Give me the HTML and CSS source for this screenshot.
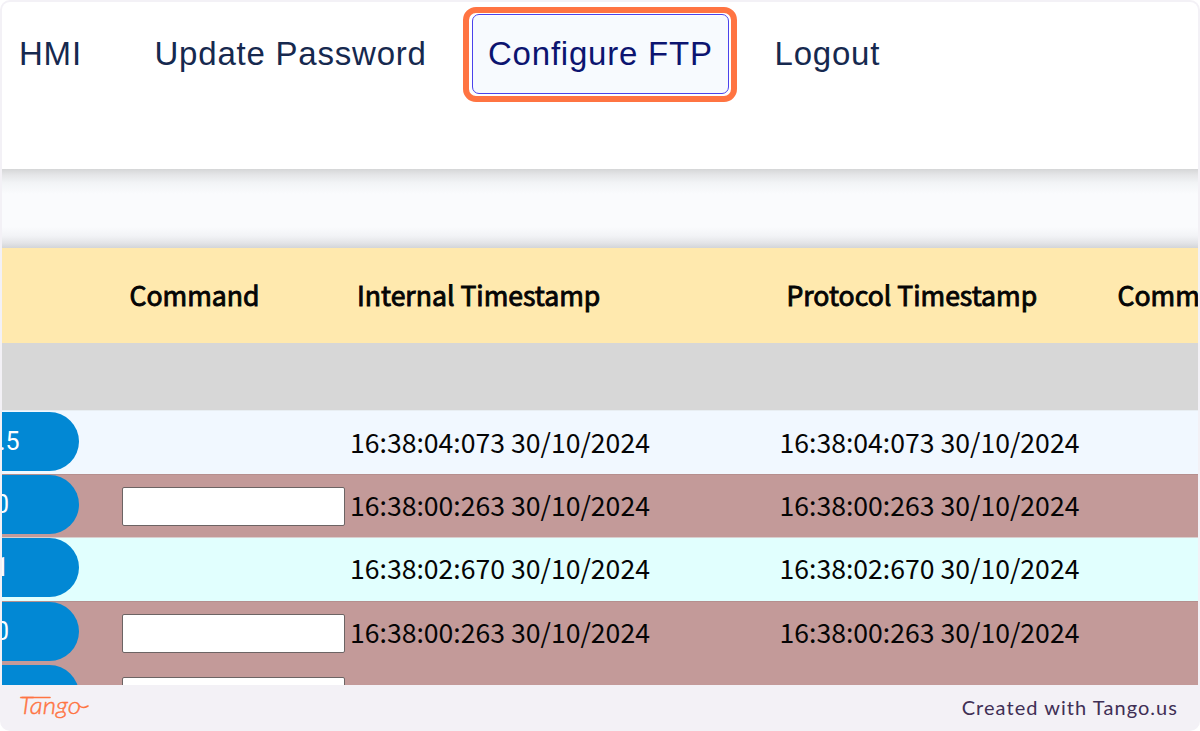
FILE: index.html
```html
<!DOCTYPE html>
<html lang="en">
<head>
<meta charset="utf-8">
<title>Configure FTP</title>
<link rel="stylesheet" href="styles.css">
</head>
<body>
<div class="card">
  <main class="screen">
    <nav class="nav">
      <a class="nav-item">HMI</a>
      <a class="nav-item">Update Password</a>
      <a class="nav-item active">Configure FTP</a>
      <a class="nav-item">Logout</a>
    </nav>
    <div class="gap"></div>
    <section class="table">
      <div class="row head"><span></span><span>Command</span><span>Internal Timestamp</span><span>Protocol Timestamp</span><span>Comm</span></div>
      <div class="filter"></div>
      <div class="row blue"><b class="pill wide">.5</b><span></span><span>16:38:04:073 30/10/2024</span><span>16:38:04:073 30/10/2024</span></div>
      <div class="row rose"><b class="pill">0</b><input class="field" aria-label="Command"><span>16:38:00:263 30/10/2024</span><span>16:38:00:263 30/10/2024</span></div>
      <div class="row cyan"><b class="pill">1</b><span></span><span>16:38:02:670 30/10/2024</span><span>16:38:02:670 30/10/2024</span></div>
      <div class="row rose"><b class="pill">0</b><input class="field" aria-label="Command"><span>16:38:00:263 30/10/2024</span><span>16:38:00:263 30/10/2024</span></div>
      <div class="row rose last"><b class="pill"></b><input class="field" aria-label="Command"></div>
    </section>
  </main>
  <footer class="footer">
    <svg class="logo" width="76" height="38" viewBox="0 0 76 38">
      <text class="logo-text" x="2" y="23" textLength="62" lengthAdjust="spacingAndGlyphs">Tango</text>
      <path class="logo-bar" d="M5 6.5H33"/>
      <path class="logo-bar" d="M62.5 15Q66 18 71 15"/>
    </svg>
    <span class="credit">Created with Tango.us</span>
  </footer>
</div>
</body>
</html>
```
FILE: styles.css
```css
* { box-sizing: border-box; }
body { margin: 0; background: #fff; overflow: hidden; }
.card {
  width: 1200px; height: 731px; padding: 2px 2px 0;
  background: #f3f1f6; border-radius: 10px; overflow: hidden;
  display: flex; flex-direction: column;
}
.screen {
  height: 683px; overflow: hidden; border-radius: 8px 8px 0 0;
  background: #fff; display: flex; flex-direction: column;
}
.nav {
  flex: none; height: 167px; padding: 5px 0 0 17px;
  display: flex; align-items: flex-start;
  font: 33px/38px "Liberation Sans", Arial, sans-serif;
  letter-spacing: .78px; color: #16294f; white-space: nowrap;
}
.nav-item { padding-top: 28px; }
.nav-item:nth-child(1) { width: 135.5px; }
.nav-item:nth-child(2) { width: 308.5px; }
.nav-item.active {
  width: 274px; height: 95px; padding: 22px 0 0 19px;
  border: 6px solid #ff7442; border-radius: 13px;
  color: #0c1470; background: #f7fafe;
  box-shadow: inset 0 0 0 3px #fff;
  position: relative;
}
.nav-item.active::after {
  content: ""; position: absolute; inset: 1px 2px 2px 3px;
  border: 1.5px solid #4b43ec; border-radius: 7px;
}
.nav-item:nth-child(4) { margin-left: 37.5px; }
.gap {
  flex: none; height: 79px;
  background: linear-gradient(#d5d6d7 0, #e5e6e8 6px, #f2f4f6 14px, #fafbfd 25px, #fafbfd 58px, #f2f3f6 67px, #e3e4e7 74px, #d3d5d8 79px);
}
.table {
  flex: none; font: 26.6px/38px "Noto Sans CJK SC", "Noto Sans", sans-serif;
  color: #050505; white-space: nowrap;
}
.row {
  height: 63px; display: grid; align-items: center;
  grid-template-columns: 120px 228px 429.5px 331px 83px;
}
.row.head {
  height: 95px; background: #ffe9ae; padding: 0 0 1px 7px;
  font-weight: 400; -webkit-text-stroke: .9px #050505;
}
.row.head span:nth-child(2) { padding-left: .5px; }
.filter { height: 67px; background: #d7d7d7; }
.blue { background: #f1f8ff; border-top: 1px solid #e8eef2; height: 64px; padding-bottom: 1px; }
.rose { background: #c39a99; border-top: 1px solid #b58f8e; padding-bottom: 2px; }
.cyan { background: #e1fffe; border-top: 1px solid #d9cfce; height: 64px; padding-bottom: 3px; }
.last { border-top-color: #c39a99; }
.pill {
  width: 77px; height: 59px; text-indent: -7px;
  border-radius: 0 30px 30px 0; background: #0288d4; color: #fff;
  font: 25px/59px Roboto, sans-serif; align-self: start; margin-top: 1px;
}
.rose .pill, .cyan .pill { margin-top: .4px; }
.pill.wide { text-indent: -3px; }
.field {
  width: 223px; height: 39px; padding: 0; background: #fff;
  border: 1.5px solid #6c6464; border-radius: 2px;
  align-self: start; margin-top: 12px;
}
.footer {
  height: 46px; padding: 0 20px 0 15px;
  display: flex; align-items: center; justify-content: space-between;
}
.logo { margin-top: 3px; }
.logo-text {
  font: italic 300 24px Lato, sans-serif; fill: #ff7442;
  stroke: #ff7442; stroke-width: .4px;
}
.logo-bar { fill: none; stroke: #ff7442; stroke-width: 1.6; stroke-linecap: round; }
.credit {
  font: 20px/28px Lato, sans-serif; letter-spacing: 1.05px; color: #3f2f55;
  margin-bottom: 2px;
}
```
